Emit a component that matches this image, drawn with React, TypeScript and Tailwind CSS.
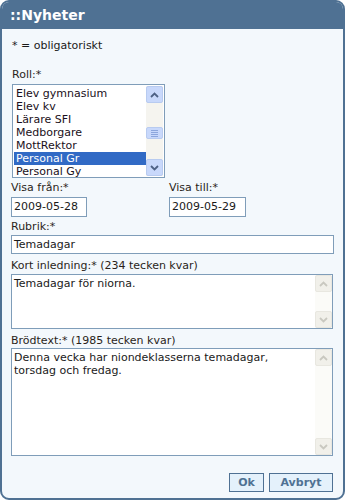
import React from "react";

const font = { fontFamily: '"DejaVu Sans", Verdana, sans-serif' };

function Arrow({ up, color }: { up: boolean; color: string }) {
  return (
    <svg width="9" height="6" viewBox="0 0 9 6">
      <path
        d={up ? "M1 5 L4.5 1.5 L8 5" : "M1 1 L4.5 4.5 L8 1"}
        fill="none"
        stroke={color}
        strokeWidth="1.8"
      />
    </svg>
  );
}

function ActiveScrollbar() {
  return (
    <div className="w-[17px] h-full bg-[#f5f4ef] flex flex-col justify-between items-center">
      <div className="w-[17px] h-[17px] rounded-[2px] border border-[#b8cbf0] bg-[#c8d8fb] flex items-center justify-center">
        <Arrow up color="#4d6185" />
      </div>
      <div className="w-[17px] h-[12px] rounded-[2px] border border-[#b8cbf0] bg-[#c8d8fb] flex flex-col items-center justify-center gap-[1px] mt-[24px]">
        <div className="w-[7px] h-[1px] bg-[#8ca6dc]" />
        <div className="w-[7px] h-[1px] bg-[#8ca6dc]" />
        <div className="w-[7px] h-[1px] bg-[#8ca6dc]" />
        <div className="w-[7px] h-[1px] bg-[#8ca6dc]" />
      </div>
      <div className="flex-1" />
      <div className="w-[17px] h-[17px] rounded-[2px] border border-[#b8cbf0] bg-[#c8d8fb] flex items-center justify-center">
        <Arrow up={false} color="#4d6185" />
      </div>
    </div>
  );
}

function DisabledScrollbar() {
  return (
    <div className="w-[17px] h-full bg-[#fbfbf8] flex flex-col justify-between">
      <div className="w-[17px] h-[17px] rounded-[2px] border border-[#e8e7e0] bg-[#f1f0ea] flex items-center justify-center">
        <Arrow up color="#c9c8c0" />
      </div>
      <div className="w-[17px] h-[17px] rounded-[2px] border border-[#e8e7e0] bg-[#f1f0ea] flex items-center justify-center">
        <Arrow up={false} color="#c9c8c0" />
      </div>
    </div>
  );
}

const items = [
  "Elev gymnasium",
  "Elev kv",
  "Lärare SFI",
  "Medborgare",
  "MottRektor",
  "Personal Gr",
  "Personal Gy",
];

function Label({ children }: { children: React.ReactNode }) {
  return <div className="h-[13px] leading-[13px] text-[11px] text-[#2a1f1a]">{children}</div>;
}

export default function App() {
  return (
    <div className="w-[345px] h-[500px] bg-white" style={font}>
      <div className="w-[345px] h-[500px] rounded-[9px] border-2 border-[#4f7193] bg-[#f3f8fc] overflow-hidden flex flex-col">
        <div className="h-[27px] bg-[#4f7193] text-white font-bold text-[14px] leading-[27px] pl-[8px]">
          ::Nyheter
        </div>
        <div className="flex flex-col pl-[9px] pr-[9px]">
          <div className="mt-[10px] h-[13px] leading-[13px] text-[11px] text-[#1a1a1a] pl-[1px]">
            * = obligatoriskt
          </div>
          <div className="mt-[16px] pl-[1px]">
            <Label>Roll:*</Label>
          </div>
          <div className="mt-[3px] ml-[1px] w-[153px] h-[94px] border border-[#7f9db9] bg-white flex p-[1px]">
            <div className="flex-1 flex flex-col text-[11px] leading-[13px] text-[#1a1020] pt-[1px]">
              {items.map((it) => (
                <div
                  key={it}
                  className={
                    it === "Personal Gr"
                      ? "h-[13px] pl-[2px] bg-[#316ac5] text-white"
                      : "h-[13px] pl-[2px]"
                  }
                >
                  {it}
                </div>
              ))}
            </div>
            <ActiveScrollbar />
          </div>
          <div className="mt-[3px] flex">
            <div className="w-[158px] flex flex-col">
              <Label>Visa från:*</Label>
              <div className="mt-[3px] w-[76px] h-[20px] border border-[#7f9db9] bg-white text-[11px] leading-[18px] pl-[2px] text-[#1a1a1a]">
                2009-05-28
              </div>
            </div>
            <div className="flex flex-col">
              <Label>Visa till:*</Label>
              <div className="mt-[3px] w-[77px] h-[20px] border border-[#7f9db9] bg-white text-[11px] leading-[18px] pl-[2px] text-[#1a1a1a]">
                2009-05-29
              </div>
            </div>
          </div>
          <div className="mt-[3px]">
            <Label>Rubrik:*</Label>
          </div>
          <div className="mt-[2px] w-[323px] h-[19px] border border-[#7f9db9] bg-white text-[11px] leading-[17px] pl-[2px] text-[#1a1a1a]">
            Temadagar
          </div>
          <div className="mt-[5px]">
            <Label>Kort inledning:* (234 tecken kvar)</Label>
          </div>
          <div className="mt-[2px] w-[322px] h-[55px] border border-[#7f9db9] bg-white flex">
            <div className="flex-1 text-[11px] leading-[13px] pl-[2px] pt-[2px] text-[#1a1a1a]">
              Temadagar för niorna.
            </div>
            <DisabledScrollbar />
          </div>
          <div className="mt-[5px]">
            <Label>Brödtext:* (1985 tecken kvar)</Label>
          </div>
          <div className="mt-[1px] w-[322px] h-[108px] border border-[#7f9db9] bg-white flex">
            <div className="flex-1 text-[11px] leading-[13px] pl-[2px] pt-[2px] text-[#1a1a1a]">
              Denna vecka har niondeklasserna temadagar,
              <br />
              torsdag och fredag.
            </div>
            <DisabledScrollbar />
          </div>
          <div className="mt-[17px] flex justify-end gap-[5px] pr-[1px]">
            <div className="w-[35px] h-[19px] border border-[#4f7193] bg-[#e4f1fb] text-[#4f7193] font-bold text-[11px] leading-[17px] text-center">
              Ok
            </div>
            <div className="w-[64px] h-[19px] border border-[#4f7193] bg-[#e4f1fb] text-[#4f7193] font-bold text-[11px] leading-[17px] text-center">
              Avbryt
            </div>
          </div>
        </div>
      </div>
    </div>
  );
}
